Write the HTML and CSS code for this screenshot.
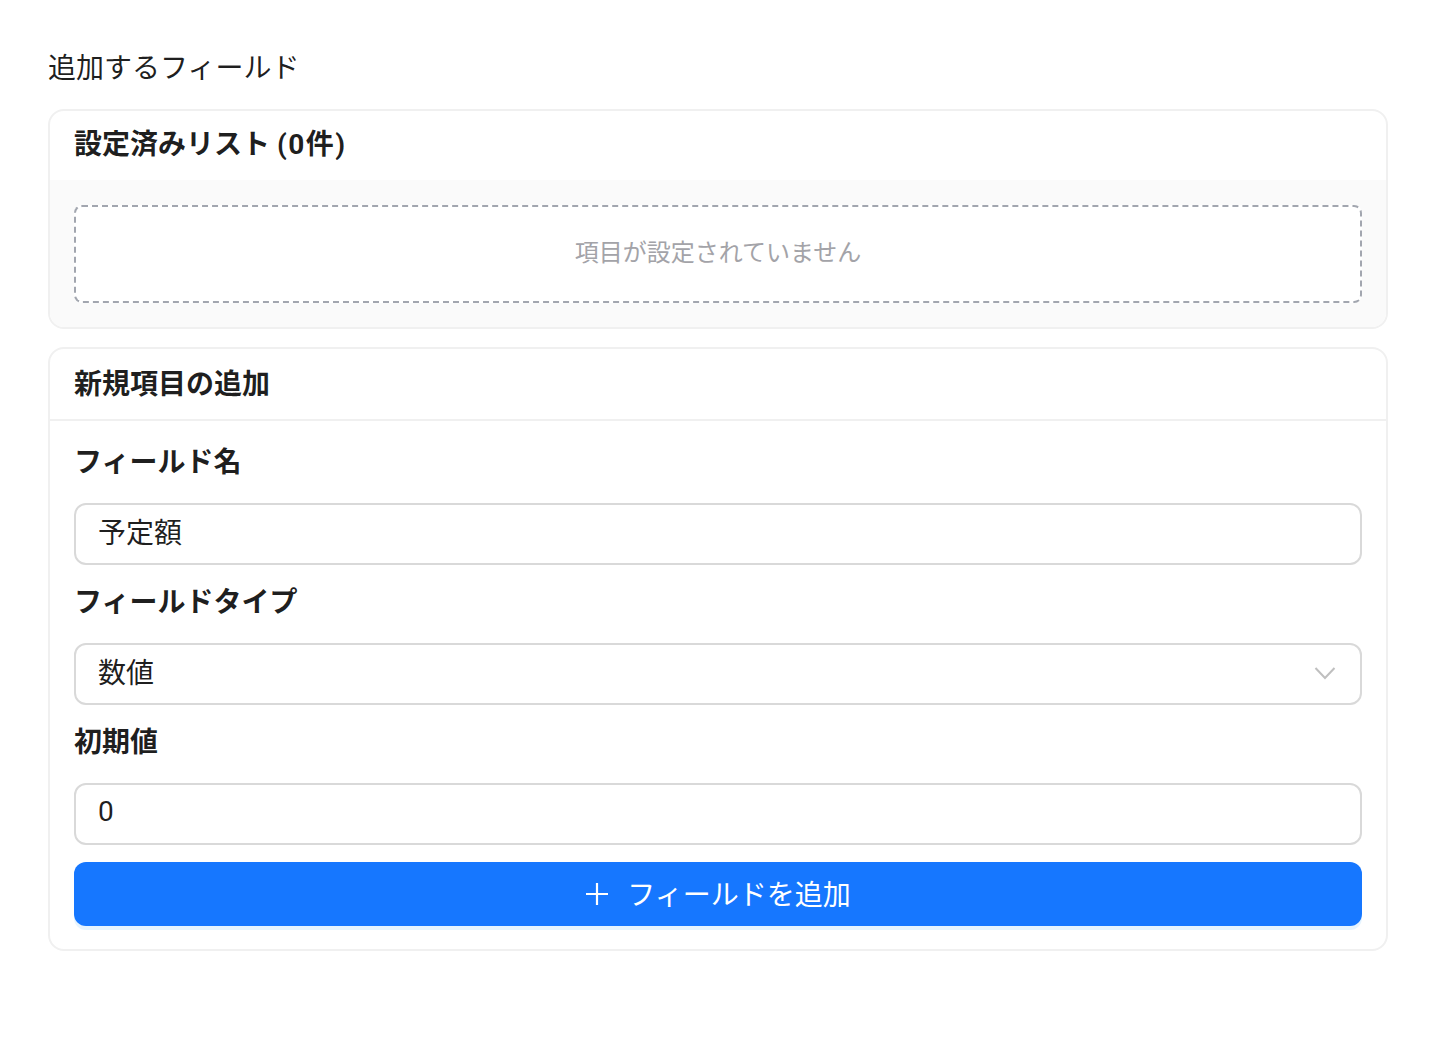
FILE: index.html
```html
<!DOCTYPE html>
<html lang="ja">
<head>
<meta charset="utf-8">
<title>追加するフィールド</title>
<link rel="stylesheet" href="styles.css">
</head>
<body>
<div class="page">
  <div class="page-title">追加するフィールド</div>

  <div class="card">
    <div class="card-head card-head-plain">設定済みリスト <span class="count">(0件)</span></div>
    <div class="card-body card-body-grey">
      <div class="empty-box">項目が設定されていません</div>
    </div>
  </div>

  <div class="card">
    <div class="card-head card-head-line">新規項目の追加</div>
    <div class="card-body form">
      <div class="label">フィールド名</div>
      <div class="control">予定額</div>
      <div class="label">フィールドタイプ</div>
      <div class="control select">
        <span>数値</span>
        <svg class="chevron" width="22" height="14" viewBox="0 0 22 14"><path d="M1.5 2 L11 12 L20.5 2" fill="none" stroke="#bfbfbf" stroke-width="2"/></svg>
      </div>
      <div class="label">初期値</div>
      <div class="control">0</div>
      <button class="btn">
        <svg class="plus" width="24" height="24" viewBox="0 0 24 24"><path d="M12 1 V23 M1 12 H23" fill="none" stroke="#fff" stroke-width="2.2"/></svg>
        <span>フィールドを追加</span>
      </button>
    </div>
  </div>
</div>
</body>
</html>
```

FILE: styles.css
```css
* { box-sizing: border-box; }
html, body { margin: 0; padding: 0; background: #fff; }
body {
  font-family: Roboto, "Noto Sans CJK JP", "Noto Sans", sans-serif;
  color: rgba(0, 0, 0, 0.88);
}
.page {
  padding: 47px 48px 40px;
  display: flex;
  flex-direction: column;
}
.page-title {
  font-size: 28px;
  line-height: 44px;
  height: 44px;
  margin-bottom: 18px;
}
.card {
  border: 2px solid #f0f0f0;
  border-radius: 16px;
  background: #fff;
  overflow: hidden;
  margin-bottom: 18px;
}
.card-head {
  font-size: 28px;
  font-weight: 700;
  padding: 0 24px 7px;
  display: flex;
  align-items: center;
  white-space: pre;
}
.count { letter-spacing: 1.5px; margin-left: 0; }
.card-head-plain { height: 69px; }
.card-head-line { height: 72px; border-bottom: 2px solid #f0f0f0; padding-bottom: 5px; }
.card-body { padding: 24px; }
.card-body-grey { background: #fafafa; padding: 25px 24px 24px; }
.empty-box {
  height: 98px;
  border: 2px dashed #a2a6af;
  border-radius: 8px;
  background: #fff;
  display: flex;
  align-items: center;
  justify-content: center;
  font-size: 24px;
  color: #a3a3a8;
  padding-bottom: 7px;
}
.form {
  display: flex;
  flex-direction: column;
  padding: 20px 24px 23px;
}
.label {
  font-size: 28px;
  font-weight: 700;
  line-height: 40px;
  margin-bottom: 22px;
  padding-top: 2px;
  height: 40px;
}
.control {
  height: 62px;
  border: 2px solid #d9d9d9;
  border-radius: 12px;
  padding: 0 22px 6px;
  font-size: 28px;
  display: flex;
  align-items: center;
  margin-bottom: 16px;
}
.select { justify-content: space-between; padding-right: 24px; }
.chevron { display: block; margin-top: 4px; }
.control:last-of-type { margin-bottom: 17px; }
.btn {
  height: 64px;
  border: none;
  border-radius: 12px;
  background: #1677ff;
  color: #fff;
  font-family: inherit;
  font-size: 28px;
  display: flex;
  align-items: center;
  justify-content: center;
  gap: 18px;
  box-shadow: 0 4px 0 rgba(5, 145, 255, 0.1);
  padding: 0 0 2px;
}
.plus { display: block; margin-top: 2px; }
```
